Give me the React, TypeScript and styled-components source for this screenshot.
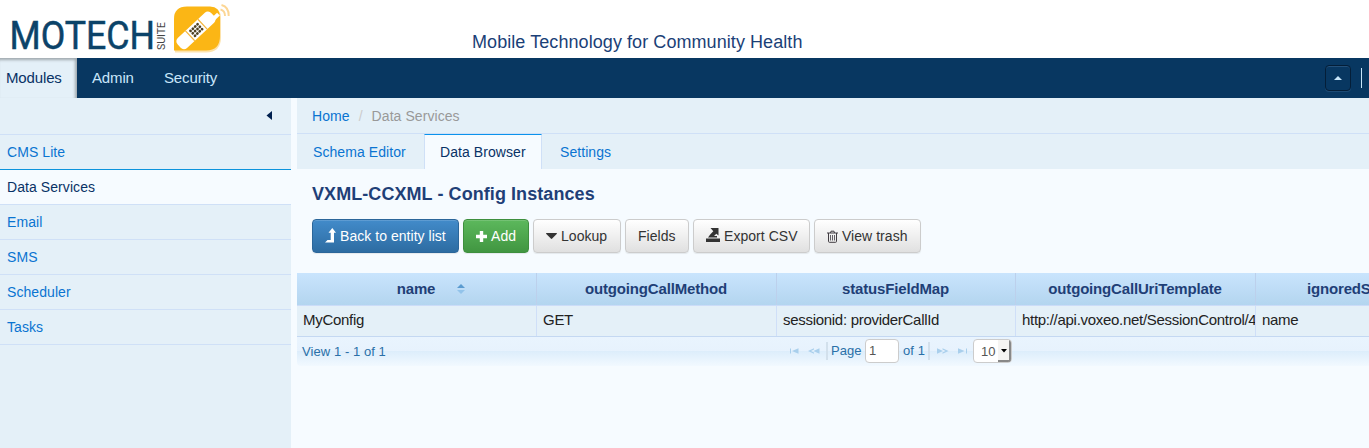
import React from 'react';
import styled, { createGlobalStyle, css } from 'styled-components';

const Global = createGlobalStyle`
  * { box-sizing: border-box; }
  html, body { margin: 0; height: 100%; overflow: hidden; }
  body { background: #f6fbff; font: 14px/20px "Liberation Sans", Arial, sans-serif; color: #1f3f77; }
`;

const Page = styled.div`
  height: 448px;
  display: flex;
  flex-direction: column;
  overflow: hidden;
  letter-spacing: 0.07px;
`;
const Header = styled.header`
  height: 58px;
  flex: none;
  display: flex;
  background: #fff;
`;
const LogoSvg = styled.svg`
  width: 240px;
  height: 58px;
  flex: none;
  letter-spacing: 0;
`;
const Tagline = styled.div`
  margin: 29px 0 0 232px;
  font-size: 18px;
  line-height: 26px;
  color: #1b3f77;
  white-space: nowrap;
`;
const NavBar = styled.nav`
  height: 40px;
  flex: none;
  display: flex;
  background: #083761;
`;
const NavItem = styled.a<{ $active?: boolean; $width: number }>`
  width: ${p => p.$width}px;
  padding: 10px 0 0 ${p => (p.$active ? 6 : 15)}px;
  font-size: 15px;
  letter-spacing: -0.14px;
  color: ${p => (p.$active ? '#083266' : '#c8e6fa')};
  ${p => p.$active && css`
    background: #e4f0f8;
    box-shadow: inset -2px 2px 3px rgba(0, 0, 0, 0.3);
  `}
`;
const NavEnd = styled.div`
  margin-left: auto;
  display: flex;
  padding-top: 7px;
`;
const UpButton = styled.button`
  width: 26px;
  height: 26px;
  padding: 0;
  margin-right: 10px;
  display: flex;
  align-items: center;
  justify-content: center;
  background: #083761;
  border: 1px solid #041e38;
  border-radius: 4px;
  box-shadow: inset 0 1px 0 #24507a, 0 1px 0 #1c4a74;
`;
const NavRule = styled.div`
  width: 1px;
  height: 20px;
  margin: 3px 7px 0 0;
  background: #c8e6fa;
`;
const Body = styled.div`
  flex: 1;
  display: flex;
  min-height: 0;
`;
const Sidebar = styled.aside`
  width: 291px;
  margin-right: 6px;
  flex: none;
  background: #e4f0f8;
`;
const Collapse = styled.div`
  height: 37px;
  padding: 13px 19px 0 0;
  display: flex;
  justify-content: flex-end;
  align-items: flex-start;
  border-bottom: 1px solid #cfe0f7;
`;
const SideItem = styled.a<{ $active?: boolean; $beforeActive?: boolean }>`
  display: block;
  height: 35px;
  padding: 7px 0 0 7px;
  color: ${p => (p.$active ? '#083266' : '#0a74d1')};
  background: ${p => (p.$active ? '#f6fbff' : 'transparent')};
  border-bottom: 1px solid ${p => (p.$beforeActive ? '#0b93dc' : '#cfe0f7')};
`;
const Main = styled.main`
  flex: 1;
  min-width: 0;
  overflow: hidden;
`;
const Breadcrumb = styled.div`
  height: 36px;
  padding: 8px 0 0 15px;
  display: flex;
  background: #e4f0f8;
  border-bottom: 1px solid #cfe0f7;
  color: #999;
  white-space: pre;
`;
const Home = styled.a`
  color: #0a74d1;
`;
const Slash = styled.span`
  padding: 0 9px;
  color: #ccc;
`;
const Tabs = styled.div`
  height: 35px;
  display: flex;
  background: #e4f0f8;
`;
const Tab = styled.a<{ $active?: boolean; $width: number; $pad: number }>`
  width: ${p => p.$width}px;
  padding: 8px 0 0 ${p => p.$pad}px;
  color: #0a74d1;
  ${p => p.$active && css`
    color: #083266;
    background: #f6fbff;
    padding-top: 7px;
    border: solid #cfe0f7;
    border-width: 1px 1px 0;
    border-top-color: #0b93ec;
  `}
`;
const Title = styled.h1`
  margin: 12px 0 0 15px;
  height: 38px;
  font-size: 18px;
  line-height: 26px;
  font-weight: bold;
  color: #1f3f77;
`;
const Buttons = styled.div`
  display: flex;
  gap: 4px;
  padding-left: 15px;
  height: 54px;
`;
const tones = {
  plain: css`background: linear-gradient(#fff, #e0e0e0); border-color: #ccc; color: #333;`,
  blue: css`background: linear-gradient(#428bca, #2d6ca2); border-color: #2b669a; color: #fff;`,
  green: css`background: linear-gradient(#5cb85c, #419641); border-color: #3e8f3e; color: #fff;`,
};
const Button = styled.button<{ $tone?: keyof typeof tones; $width: number; $lift?: number }>`
  width: ${p => p.$width}px;
  height: 34px;
  padding: 0 0 0 12px;
  display: flex;
  align-items: center;
  font: 14px/20px "Liberation Sans", Arial, sans-serif;
  letter-spacing: 0.04px;
  white-space: nowrap;
  border: 1px solid;
  border-radius: 4px;
  box-shadow: inset 0 1px 0 rgba(255, 255, 255, 0.15), 0 1px 1px rgba(0, 0, 0, 0.075);
  ${p => tones[p.$tone ?? 'plain']}
  & svg { margin: 0 4px ${p => p.$lift ?? 0}px 0; flex: none; }
`;
const Grid = styled.div`
  width: 1204px;
`;
const HeadRow = styled.div`
  display: flex;
  height: 33px;
  background: linear-gradient(#c9e4fd, #b3d5ef);
  border-bottom: 1px solid #cbdcf8;
`;
const HeadCell = styled.div<{ $width: number }>`
  width: ${p => p.$width}px;
  flex: none;
  display: flex;
  justify-content: center;
  padding: 6px 1px 0 0;
  font-size: 15px;
  font-weight: bold;
  letter-spacing: -0.17px;
  color: #1f3f77;
  border-right: 1px solid #bcd0ec;
`;
const SortIcon = styled.svg`
  margin: 5px -30px 0 22px;
`;
const DataRow = styled.div`
  display: flex;
  height: 31px;
  background: #e4f0f8;
  border-bottom: 1px solid #c4d8f2;
`;
const DataCell = styled.div<{ $width: number }>`
  width: ${p => p.$width}px;
  flex: none;
  padding: 4px 0 0 6px;
  font-size: 15px;
  letter-spacing: -0.29px;
  color: #222;
  white-space: nowrap;
  overflow: hidden;
  border-right: 1px solid #cfdff8;
`;
const Pager = styled.div`
  height: 29px;
  display: flex;
  font-size: 13px;
  color: #2a70a8;
  border-radius: 0 0 0 4px;
  background: linear-gradient(#e9f4fe 0, #e7f2fd 14px, #dcedfb 14px, #f2f9ff 29px);
`;
const ViewInfo = styled.div`
  width: 492px;
  padding: 5px 0 0 5px;
`;
const PagerText = styled.span<{ $width: number }>`
  width: ${p => p.$width}px;
  padding-top: 4px;
  white-space: nowrap;
`;
const PagerIcon = styled.svg<{ $gap: number }>`
  flex: none;
  margin: 11px ${p => p.$gap}px 0 0;
  fill: #a9cfec;
`;
const PagerRule = styled.div<{ $gap: number }>`
  width: 2px;
  height: 18px;
  margin: 5px ${p => p.$gap}px 0 0;
  background: #d2e0ec;
`;
const PageBox = styled.div`
  width: 34px;
  height: 24px;
  margin: 2px 4px 0 0;
  padding: 1px 0 0 3px;
  background: #fff;
  border: 1px solid #ccc;
  border-radius: 4px;
  color: #555;
`;
const SizeBox = styled.div`
  width: 39px;
  height: 24px;
  margin-top: 2px;
  padding: 2px 0 0 7px;
  display: flex;
  background: #fff;
  border: 1px solid #ccc;
  border-radius: 4px;
  color: #555;
  overflow: hidden;
`;
const SizeArrow = styled.div`
  width: 13px;
  height: 22px;
  margin: -2px 0 0 auto;
  padding: 9px 0 0 3px;
  line-height: 0;
  background: #f5f4f2;
  border-right: 2px solid #888;
  border-bottom: 2px solid #888;
`;

const columns = [
  { name: 'name', value: 'MyConfig', width: 240, sorted: true },
  { name: 'outgoingCallMethod', value: 'GET', width: 240 },
  { name: 'statusFieldMap', value: 'sessionid: providerCallId', width: 239 },
  { name: 'outgoingCallUriTemplate', value: 'http://api.voxeo.net/SessionControl/4', width: 240 },
  { name: 'ignoredStatusFields', value: 'name', width: 245 },
];

const dots = [0, 1, 2, 3].flatMap(r => [0, 1, 2].map(c => [c, r]));

const Logo = () => (
  <LogoSvg viewBox="0 0 240 58">
    <text x="9.5" y="49.300" fontFamily="Roboto, sans-serif" fontSize="38" fill="#0b4369" stroke="#0b4369" strokeWidth="0.500" textLength="145.500" lengthAdjust="spacingAndGlyphs">MOTECH</text>
    <text transform="translate(164.500 50) rotate(-90)" fontFamily="Roboto, sans-serif" fontSize="10.500" fill="#444" textLength="28" lengthAdjust="spacingAndGlyphs">SUITE</text>
    <path d="M187 8H211Q221 8 221 18V37Q221 52.500 206 52.500H175V19Q175 8 187 8Z" fill="#fde3ab" />
    <path d="M187 6.500H210Q220 6.500 220 17V36Q220 50.500 206 50.500H174V19Q174 6.500 187 6.500Z" fill="#fbb615" />
    <g transform="translate(196.300 30) rotate(-43)">
      <rect x="-23.500" y="-6.800" width="46" height="13.600" rx="4.500" fill="#fff" />
      <rect x="20" y="1.500" width="7" height="4" fill="#fff" />
      <path d="M-8.500-6.800V6.800M8.500-6.800V6.800" stroke="#f4b63d" strokeWidth="1.200" />
      {dots.map(([c, r]) => <circle key={`${c}-${r}`} cx={-4.8 + r * 3.2} cy={-3.3 + c * 3.3} r="1.400" fill="#504325" />)}
    </g>
    <path d="M220.500 9.500Q225 10.500 225 16M221.500 5Q229 7 228.700 16" fill="none" stroke="#fcd694" strokeWidth="1.900" />
  </LogoSvg>
);

export default function App() {
  return (
    <Page>
      <Global />
      <Header>
        <Logo />
        <Tagline>Mobile Technology for Community Health</Tagline>
      </Header>
      <NavBar>
        <NavItem $active $width={77}>Modules</NavItem>
        <NavItem $width={72}>Admin</NavItem>
        <NavItem $width={90}>Security</NavItem>
        <NavEnd>
          <UpButton><svg width="8" height="4" viewBox="0 0 8 4"><path d="M0 4L4 0L8 4Z" fill="#c8e6fa" /></svg></UpButton>
          <NavRule />
        </NavEnd>
      </NavBar>
      <Body>
        <Sidebar>
          <Collapse><svg width="6" height="9" viewBox="0 0 6 9"><path d="M6 0V9L.5 4.500Z" fill="#00204f" /></svg></Collapse>
          <SideItem $beforeActive>CMS Lite</SideItem>
          <SideItem $active>Data Services</SideItem>
          <SideItem>Email</SideItem>
          <SideItem>SMS</SideItem>
          <SideItem>Scheduler</SideItem>
          <SideItem>Tasks</SideItem>
        </Sidebar>
        <Main>
          <Breadcrumb><Home>Home</Home><Slash>/</Slash>Data Services</Breadcrumb>
          <Tabs>
            <Tab $width={127} $pad={16}>Schema Editor</Tab>
            <Tab $width={118} $pad={15} $active>Data Browser</Tab>
            <Tab $width={100} $pad={18}>Settings</Tab>
          </Tabs>
          <Title>VXML-CCXML - Config Instances</Title>
          <Buttons>
            <Button $tone="blue" $width={147} $lift={2}>
              <svg width="11" height="15" viewBox="0 0 11 15"><path d="M7.300 0L11 4.800H9V14.500H0L2.500 12H5.700V4.800H3.500Z" fill="#fff" /></svg>
              Back to entity list
            </Button>
            <Button $tone="green" $width={66}>
              <svg width="11" height="11" viewBox="0 0 11 11"><path d="M3.800 0H7.200V3.800H11V7.200H7.200V11H3.800V7.200H0V3.800H3.800Z" fill="#fff" /></svg>
              Add
            </Button>
            <Button $width={88}>
              <svg width="11" height="6" viewBox="0 0 11 6"><path d="M.5 0H10.500Q11.300 .3 10.700 1L6.200 5.600Q5.500 6.200 4.800 5.600L.3 1Q-.3 .3 .5 0Z" fill="#333" /></svg>
              Lookup
            </Button>
            <Button $width={64}>Fields</Button>
            <Button $width={117} $lift={3}>
              <svg width="14" height="14" viewBox="0 0 14 14"><path d="M0 10.500H14V14H0ZM4.500 0H12.500V7.500L10.300 5.700L8 8H11V9.500H2L4.200 6.600L7.300 3.300Z" fill="#333" /></svg>
              Export CSV
            </Button>
            <Button $width={107}>
              <svg width="11" height="13" viewBox="0 0 11 13" fill="none" stroke="#413c42"><path d="M0 3H11M3.500 3L4 1.200H7L7.500 3M1.500 3V11.500Q1.500 12.300 2.500 12.300H8.500Q9.500 12.300 9.500 11.500V3" /><path d="M3.500 5V10.500M5.500 5V10.500M7.500 5V10.500" strokeWidth=".8" /></svg>
              View trash
            </Button>
          </Buttons>
          <Grid>
            <HeadRow>
              {columns.map(c => (
                <HeadCell key={c.name} $width={c.width}>
                  {c.name}
                  {c.sorted && <SortIcon width="8" height="11" viewBox="0 0 8 11"><path d="M0 4L4 0L8 4Z" fill="#5b9bd0" /><path d="M0 6H8L4 10Z" fill="#92c3ea" /></SortIcon>}
                </HeadCell>
              ))}
            </HeadRow>
            <DataRow>
              {columns.map(c => <DataCell key={c.name} $width={c.width}>{c.value}</DataCell>)}
            </DataRow>
            <Pager>
              <ViewInfo>View 1 - 1 of 1</ViewInfo>
              <PagerIcon $gap={9} width="10" height="6" viewBox="0 0 10 6"><path d="M1 0.500H2V5.500H1ZM9.500 .3V5.700L3 3Z" /></PagerIcon>
              <PagerIcon $gap={6} width="12" height="6" viewBox="0 0 12 6"><path d="M6 .3L0 3L6 5.700V4.500L3 3L6 1.500ZM11.500 .3V5.700L5.500 3Z" /></PagerIcon>
              <PagerRule $gap={3} />
              <PagerText $width={34}>Page</PagerText>
              <PageBox>1</PageBox>
              <PagerText $width={25}>of 1</PagerText>
              <PagerRule $gap={7} />
              <PagerIcon $gap={9} width="12" height="6" viewBox="0 0 12 6"><path d="M0 .3L6 3L0 5.700ZM5.500 .3L11.500 3L5.500 5.700V4.500L8.500 3L5.500 1.500Z" /></PagerIcon>
              <PagerIcon $gap={5} width="10" height="6" viewBox="0 0 10 6"><path d="M0 .3L6.500 3L0 5.700ZM8 .5H9V5.500H8Z" /></PagerIcon>
              <SizeBox>10<SizeArrow><svg width="6" height="4" viewBox="0 0 6 4"><path d="M0 0H6L3 3.500Z" /></svg></SizeArrow></SizeBox>
            </Pager>
          </Grid>
        </Main>
      </Body>
    </Page>
  );
}
